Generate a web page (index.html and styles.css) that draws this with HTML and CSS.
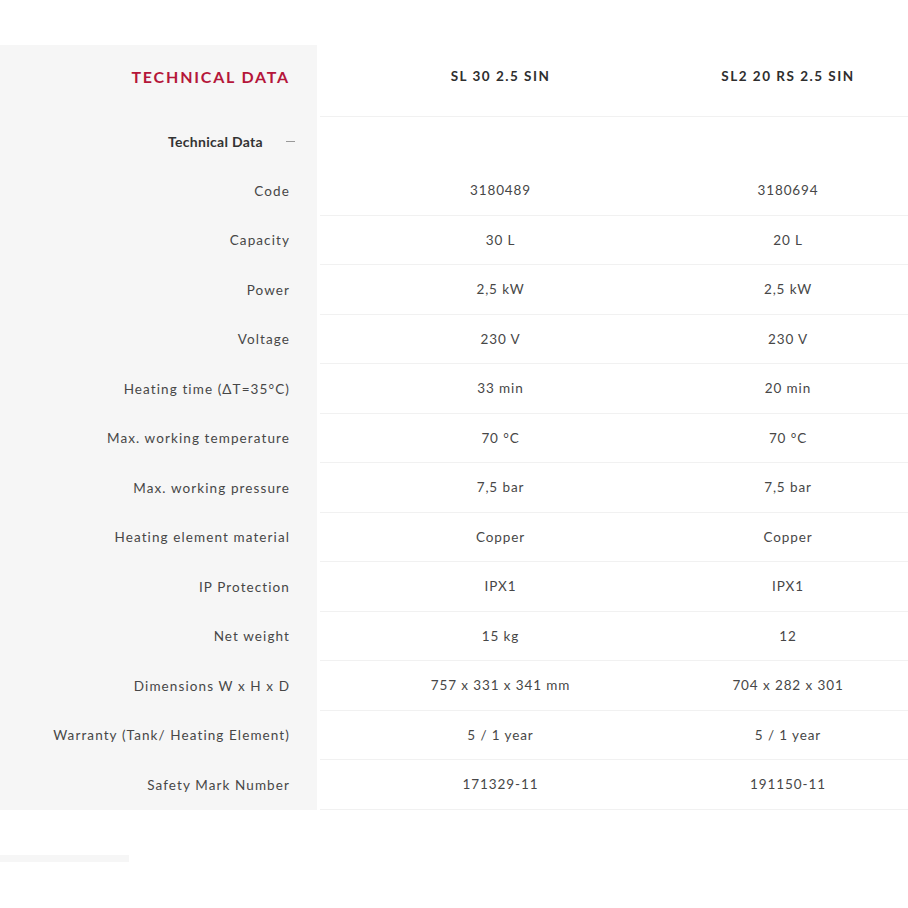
FILE: index.html
```
<!DOCTYPE html>
<html>
<head>
<meta charset="utf-8">
<link rel="stylesheet" href="styles.css">
</head>
<body>
<div class="page">
  <div class="table">
    <div class="row head">
      <div class="label title">TECHNICAL DATA</div>
      <div class="val model">SL 30 2.5 SIN</div>
      <div class="val model last">SL2 20 RS 2.5 SIN</div>
    </div>
    <div class="row group">
      <div class="label grouplabel">Technical Data <span class="minus"></span></div>
      <div class="val"></div>
      <div class="val last"></div>
    </div>
    <div class="row"><div class="label">Code</div><div class="val">3180489</div><div class="val last">3180694</div></div>
    <div class="row"><div class="label">Capacity</div><div class="val">30 L</div><div class="val last">20 L</div></div>
    <div class="row"><div class="label">Power</div><div class="val">2,5 kW</div><div class="val last">2,5 kW</div></div>
    <div class="row"><div class="label">Voltage</div><div class="val">230 V</div><div class="val last">230 V</div></div>
    <div class="row"><div class="label">Heating time (ΔT=35°C)</div><div class="val">33 min</div><div class="val last">20 min</div></div>
    <div class="row"><div class="label">Max. working temperature</div><div class="val">70 °C</div><div class="val last">70 °C</div></div>
    <div class="row"><div class="label">Max. working pressure</div><div class="val">7,5 bar</div><div class="val last">7,5 bar</div></div>
    <div class="row"><div class="label">Heating element material</div><div class="val">Copper</div><div class="val last">Copper</div></div>
    <div class="row"><div class="label">IP Protection</div><div class="val">IPX1</div><div class="val last">IPX1</div></div>
    <div class="row"><div class="label">Net weight</div><div class="val">15 kg</div><div class="val last">12</div></div>
    <div class="row"><div class="label">Dimensions W x H x D</div><div class="val">757 x 331 x 341 mm</div><div class="val last">704 x 282 x 301</div></div>
    <div class="row"><div class="label">Warranty (Tank/ Heating Element)</div><div class="val">5 / 1 year</div><div class="val last">5 / 1 year</div></div>
    <div class="row"><div class="label">Safety Mark Number</div><div class="val">171329-11</div><div class="val last">191150-11</div></div>
  </div>
  <div class="footbar"></div>
</div>
</body>
</html>
```

FILE: styles.css
```
html, body {
  margin: 0;
  padding: 0;
  background: #ffffff;
}
.page {
  padding-top: 45px;
  font-family: "Lato", "Liberation Sans", sans-serif;
  color: #3b3b3b;
}
.table {
  display: flex;
  flex-direction: column;
}
.row {
  display: grid;
  grid-template-columns: 317px 364px 1fr;
  height: 49.5px;
}
.row.head {
  height: 71.5px;
}
.label {
  background: #f6f6f6;
  display: flex;
  align-items: center;
  justify-content: flex-end;
  padding-right: 27px;
  font-size: 13.5px;
  letter-spacing: 1.1px;
  color: #474747;
}
.val {
  display: flex;
  align-items: center;
  justify-content: center;
  font-size: 13.5px;
  letter-spacing: 0.9px;
  color: #474747;
  border-bottom: 1px solid #f1f1f1;
  margin-left: 3px;
}
.val.last {
  margin-left: 0;
  padding-right: 13px;
}
.head .label, .head .val {
  padding-bottom: 9px;
}
.title {
  color: #b5163a;
  font-weight: 700;
  font-size: 16px;
  letter-spacing: 1.8px;
}
.model {
  font-weight: 700;
  font-size: 13.5px;
  letter-spacing: 1.5px;
  color: #2e2e2e;
}
.grouplabel {
  font-weight: 700;
  font-size: 14px;
  letter-spacing: 0.3px;
  color: #333;
  padding-right: 22px;
}
.minus {
  display: inline-block;
  width: 9px;
  height: 1px;
  background: #999;
  margin-left: 23px;
}
.group .val {
  border-bottom: none;
}
.footbar {
  margin-top: 45px;
  width: 129px;
  height: 7px;
  background: #f6f6f6;
}
```
